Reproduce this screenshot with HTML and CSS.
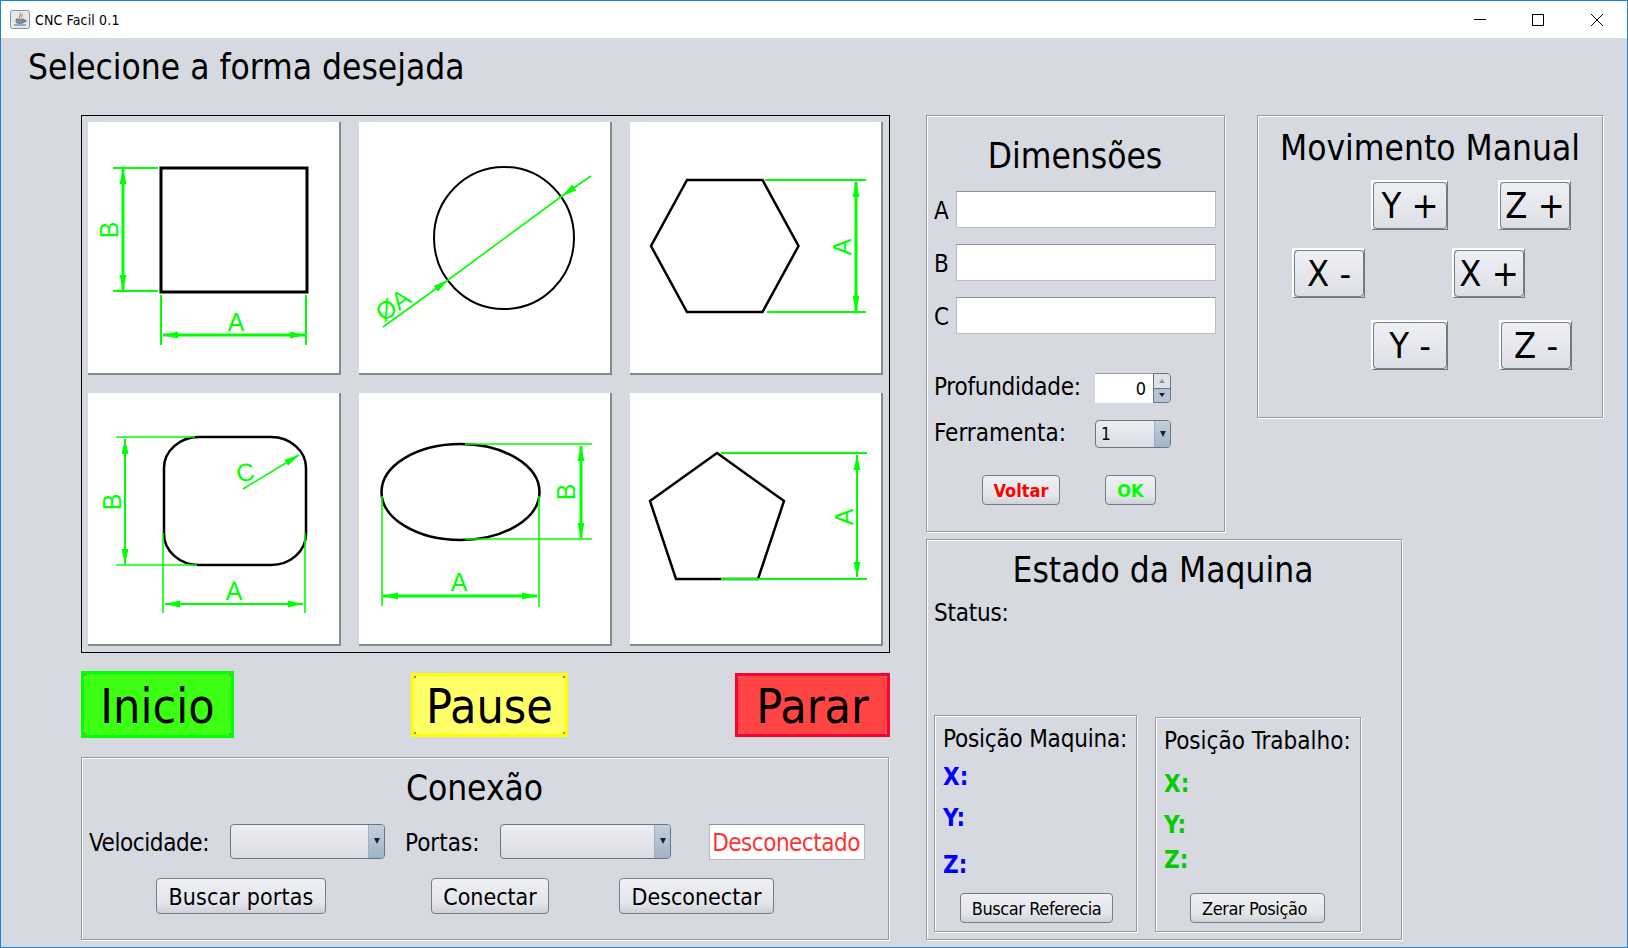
FILE: index.html
```html
<!DOCTYPE html>
<html lang="pt">
<head>
    <meta charset="UTF-8">
    <title>CNC Facil 0.1</title>
    <link rel="stylesheet" href="styles.css">
</head>
<body>
<div class="window">
    <header class="titlebar">
        <svg class="app-icon" width="20" height="19" viewBox="0 0 20 19">
            <rect x="0.5" y="0.5" width="19" height="18" rx="2" fill="#e4e8ee" stroke="#8a929c"/>
            <path d="M10 3c2 2-2 3 0 5M12 4c1 1-1 2 0 3" fill="none" stroke="#e07a20" stroke-width="1.2"/>
            <path d="M6 9h8v3c0 2-8 2-8 0zM14 10h2v2h-2" fill="#7d8fa3" stroke="#5a6a7c" stroke-width="0.6"/>
            <path d="M4 15h12" stroke="#5a6a7c"/>
        </svg>
        <span class="app-title">CNC Facil 0.1</span>
        <div class="win-controls">
            <svg width="58" height="14" viewBox="0 0 58 14"><path d="M23 6.5h12" stroke="#000"/></svg>
            <svg width="58" height="14" viewBox="0 0 58 14"><rect x="23.5" y="1.5" width="11" height="11" fill="none" stroke="#000"/></svg>
            <svg width="58" height="14" viewBox="0 0 58 14"><path d="M24 1l12 12M36 1L24 13" stroke="#000"/></svg>
        </div>
    </header>

    <h1 class="heading">Selecione a forma desejada</h1>

    <div class="main">
        <div class="left-col">
            <div class="shapes">
                <svg class="tile" viewBox="0 0 251 251">
                    <defs>
                        <marker id="arrow" markerUnits="userSpaceOnUse" markerWidth="16" markerHeight="8" refX="15" refY="4" orient="auto-start-reverse">
                            <path d="M0 0.5L15 4L0 7.5z" fill="#00ff00"/>
                        </marker>
                    </defs>
                    <rect class="outline" x="73" y="46" width="146" height="124"/>
                    <path class="dim" d="M25 46h45M25 169h45M73 173v50M218 173v50"/>
                    <line class="dim heavy dim-arrow" x1="35" y1="47" x2="35" y2="168"/>
                    <line class="dim heavy dim-arrow" x1="75" y1="213" x2="217" y2="213"/>
                    <text class="dim-text" x="148" y="209">A</text>
                    <text class="dim-text" transform="translate(30 108) rotate(-90)">B</text>
                </svg>
                <svg class="tile" viewBox="0 0 251 251">
                    <ellipse class="outline circle" cx="145" cy="116" rx="70" ry="71"/>
                    <path class="dim thin-dim" d="M89 158L203 74"/>
                    <line class="dim thin-dim dim-end" x1="24" y1="205" x2="89" y2="158"/>
                    <line class="dim thin-dim dim-end" x1="232" y1="54" x2="203" y2="74"/>
                    <text class="dim-text" transform="translate(39 190) rotate(-36)">ØA</text>
                </svg>
                <svg class="tile" viewBox="0 0 251 251">
                    <polygon class="outline thin" points="57,58 132.5,58 168.5,124 132.5,190 57,190 21,124"/>
                    <path class="dim" d="M135 58h101M137 190h99"/>
                    <line class="dim heavy dim-arrow" x1="226" y1="60" x2="226" y2="189"/>
                    <text class="dim-text" transform="translate(221 125) rotate(-90)">A</text>
                </svg>
                <svg class="tile" viewBox="0 0 251 251">
                    <rect class="outline thin" x="76" y="44" width="142" height="128" rx="35" ry="31"/>
                    <path class="dim thin-dim" d="M28 44h79M28 172h81M75 140v80M217 140v80"/>
                    <line class="dim dim-arrow" x1="37" y1="46" x2="37" y2="171"/>
                    <line class="dim dim-arrow" x1="77" y1="211" x2="215" y2="211"/>
                    <line class="dim thin-dim dim-end" x1="155" y1="96" x2="211" y2="62"/>
                    <text class="dim-text" x="146" y="207">A</text>
                    <text class="dim-text" transform="translate(33 109) rotate(-90)">B</text>
                    <text class="dim-text" transform="translate(159 88) rotate(-10)">C</text>
                </svg>
                <svg class="tile" viewBox="0 0 251 251">
                    <ellipse class="outline thin" cx="101.5" cy="99" rx="79" ry="48"/>
                    <path class="dim thin-dim" d="M106 51h127M106 146h127M23 103v110M180 103v111"/>
                    <line class="dim heavy dim-arrow" x1="222" y1="53" x2="222" y2="145"/>
                    <line class="dim heavy dim-arrow" x1="24" y1="203" x2="178" y2="203"/>
                    <text class="dim-text" x="100" y="198">A</text>
                    <text class="dim-text" transform="translate(216 99) rotate(-90)">B</text>
                </svg>
                <svg class="tile" viewBox="0 0 251 251">
                    <polygon class="outline thin" points="87,60 154,108 128,186 46,186 20,108"/>
                    <path class="dim" d="M91 60h146M91 186h146"/>
                    <line class="dim dim-arrow" x1="227" y1="62" x2="227" y2="184"/>
                    <text class="dim-text" transform="translate(223 124) rotate(-90)">A</text>
                </svg>
            </div>

            <div class="actions">
                <button class="action action-start">Inicio</button>
                <button class="action action-pause">Pause</button>
                <button class="action action-stop">Parar</button>
            </div>

            <section class="panel conexao">
                <h2 class="panel-title conexao-title">Conexão</h2>
                <div class="conexao-row">
                    <label class="label lbl-velocidade">Velocidade:</label>
                    <div class="combo combo-velocidade"><span class="combo-arrow"></span></div>
                    <label class="label lbl-portas">Portas:</label>
                    <div class="combo combo-portas"><span class="combo-arrow"></span></div>
                    <div class="status-field">Desconectado</div>
                </div>
                <div class="conexao-buttons">
                    <button class="btn btn-buscar">Buscar portas</button>
                    <button class="btn btn-conectar">Conectar</button>
                    <button class="btn btn-desconectar">Desconectar</button>
                </div>
            </section>
        </div>

        <div class="right-col">
            <div class="right-top">
                <section class="panel dimensoes">
                    <h2 class="panel-title dimensoes-title">Dimensões</h2>
                    <div class="field"><label class="label field-label">A</label><input class="text-input" type="text"></div>
                    <div class="field"><label class="label field-label">B</label><input class="text-input" type="text"></div>
                    <div class="field"><label class="label field-label">C</label><input class="text-input" type="text"></div>
                    <div class="option option-depth">
                        <label class="label option-label lbl-depth">Profundidade:</label>
                        <div class="spinner">
                            <span class="spinner-value">0</span>
                            <span class="spinner-btns">
                                <span class="spin-btn"><i class="tri tri-up"></i></span>
                                <span class="spin-btn"><i class="tri"></i></span>
                            </span>
                        </div>
                    </div>
                    <div class="option option-tool">
                        <label class="label option-label">Ferramenta:</label>
                        <div class="combo combo-tool"><span class="combo-value">1</span><span class="combo-arrow"></span></div>
                    </div>
                    <div class="dim-buttons">
                        <button class="btn btn-voltar">Voltar</button>
                        <button class="btn btn-ok">OK</button>
                    </div>
                </section>

                <section class="panel movimento">
                    <h2 class="panel-title movimento-title">Movimento Manual</h2>
                    <div class="jog-row jog-row-y">
                        <button class="jog jog-y"><span>Y +</span></button>
                        <button class="jog jog-z"><span>Z +</span></button>
                    </div>
                    <div class="jog-row jog-row-x">
                        <button class="jog"><span>X -</span></button>
                        <button class="jog jog-xp"><span>X +</span></button>
                    </div>
                    <div class="jog-row jog-row-y jog-row-last">
                        <button class="jog jog-y"><span>Y -</span></button>
                        <button class="jog jog-z jog-zm"><span>Z -</span></button>
                    </div>
                </section>
            </div>

            <section class="panel estado">
                <h2 class="panel-title estado-title">Estado da Maquina</h2>
                <div class="label status-label">Status:</div>
                <div class="positions">
                    <div class="panel pos pos-maquina">
                        <div class="label pos-title">Posição Maquina:</div>
                        <div class="axis axis-x">X:</div>
                        <div class="axis axis-y">Y:</div>
                        <div class="axis axis-z">Z:</div>
                        <button class="btn btn-small btn-ref">Buscar Referecia</button>
                    </div>
                    <div class="panel pos pos-trabalho">
                        <div class="label pos-title">Posição Trabalho:</div>
                        <div class="axis axis-x">X:</div>
                        <div class="axis axis-y">Y:</div>
                        <div class="axis axis-z">Z:</div>
                        <button class="btn btn-small btn-zero">Zerar Posição</button>
                    </div>
                </div>
            </section>
        </div>
    </div>
</div>
</body>
</html>
```

FILE: styles.css
```css
*{margin: 0;padding: 0;box-sizing: border-box;}
html,body{width: 1628px;height: 948px;overflow: hidden;}
body{
    font-family: "DejaVu Sans", "Liberation Sans", sans-serif;
    font-stretch: condensed;
    color: #000;
}
button,input{font-family: inherit;font-stretch: inherit;color: inherit;}

.window{
    width: 1628px;
    height: 948px;
    border: 1px solid #1883d7;
    background: #d6d9e0;
}

/* title bar */
.titlebar{
    height: 37px;
    background: #fff;
    display: flex;
    align-items: center;
    padding-left: 9px;
}
.app-title{font-size: 14px;margin-left: 5px;letter-spacing: 0.15px;}
.win-controls{margin-left: auto;margin-right: 2px;display: flex;}
.win-controls svg{display: block;}

.heading{
    font-size: 35px;
    font-weight: normal;
    line-height: 59px;
    height: 77px;
    padding-left: 27px;
}

.main{
    display: flex;
    gap: 36px;
    padding-left: 80px;
}
.left-col{width: 809px;}

/* shape picker */
.shapes{
    height: 538px;
    border: 1px solid #000;
    padding: 6px;
    display: grid;
    grid-template-columns: repeat(3, 253px);
    grid-template-rows: repeat(2, 253px);
    gap: 18px;
}
.tile{
    display: block;
    width: 253px;
    height: 253px;
    background: #fff;
    border-right: 2px solid #8a8a8a;
    border-bottom: 2px solid #8a8a8a;
}
.outline{fill: none;stroke: #000;stroke-width: 3;}
.outline.thin{stroke-width: 2.5;}
.outline.circle{stroke-width: 2;}
.dim{fill: none;stroke: #00ff00;stroke-width: 2;}
.thin-dim{stroke-width: 1.6;}
.heavy{stroke-width: 3;}
.dim-arrow{marker-start: url(#arrow);marker-end: url(#arrow);}
.dim-end{marker-end: url(#arrow);}
.dim-text{
    fill: #00ff00;
    font-family: "Liberation Sans", sans-serif;
    font-size: 25px;
    text-anchor: middle;
    font-stretch: normal;
}

/* start / pause / stop */
.actions{
    display: flex;
    align-items: center;
    height: 67px;
    margin-top: 18px;
}
.action{
    font-size: 48px;
    line-height: 1;
    border-style: solid;
    border-width: 3px;
    height: 64px;
    padding-top: 2px;
    background-size: 2px 2px;
    background-repeat: no-repeat;
    background-image: linear-gradient(#888, #888), linear-gradient(#888, #888), linear-gradient(#888, #888), linear-gradient(#888, #888);
    background-position: 0 0, 100% 0, 0 100%, 100% 100%;
}
.action-start{width: 153px;height: 67px;background-color: #3cff14;border-color: #00ff00;}
.action-pause{width: 157px;margin-left: 177px;background-color: #ffff66;border-color: #ffff00;}
.action-stop{width: 155px;margin-left: auto;background-color: #ff4444;border-color: #ff0033;}

/* etched panels */
.panel{
    border: 1px solid #9a9a9a;
    box-shadow: inset 1px 1px 0 #fff, 1px 1px 0 #fff;
}
.panel-title{font-size: 35px;font-weight: normal;text-align: center;}
.label{font-size: 24px;}

/* generic button */
.btn{
    font-size: 23px;
    height: 36px;
    padding-top: 1px;
    border: 1px solid #777c85;
    border-radius: 4px;
    background: linear-gradient(#eff0f4, #e3e5ea 70%, #ced1d8);
}
.btn-small{font-size: 18px;height: 30px;letter-spacing: -0.4px;}

/* combo box */
.combo{
    height: 35px;
    border: 1px solid #6d7480;
    border-radius: 4px;
    background: linear-gradient(#eeeff3, #d9dce2);
    display: flex;
    overflow: hidden;
}
.combo-arrow{
    margin-left: auto;
    width: 16px;
    background: linear-gradient(#c3d0dd, #9fb3c7);
    border-left: 1px solid #9fb0c2;
    display: flex;
    align-items: center;
    justify-content: center;
}
.combo-arrow::before{
    content: "";
    border-left: 3px solid transparent;
    border-right: 3px solid transparent;
    border-top: 6px solid #222;
}

/* conexao */
.conexao{
    width: 808px;
    height: 183px;
    margin-top: 19px;
    padding-left: 7px;
}
.conexao-title{line-height: 60px;padding-right: 28px;}
.conexao-row{
    display: flex;
    align-items: center;
    height: 36px;
    margin-top: 6px;
}
.conexao-row .label{padding-top: 1px;}
.conexao-row .combo{margin-top: -2px;}
.lbl-velocidade{width: 141px;letter-spacing: -0.4px;}
.combo-velocidade{width: 155px;}
.lbl-portas{width: 95px;margin-left: 20px;}
.combo-portas{width: 171px;}
.status-field{
    width: 156px;
    height: 36px;
    margin-left: 38px;
    padding-right: 2px;
    background: #fff;
    border: 1px solid #b8bac0;
    border-top-color: #8e9096;
    color: #ff3333;
    font-size: 24px;
    letter-spacing: -0.5px;
    line-height: 36px;
    text-align: center;
    white-space: nowrap;
}
.conexao-buttons{
    display: flex;
    margin-top: 18px;
    padding-left: 67px;
}
.btn-buscar{width: 170px;letter-spacing: 0.15px;}
.btn-conectar{width: 118px;margin-left: 105px;}
.btn-desconectar{width: 155px;margin-left: 70px;}

/* right side */
.right-top{display: flex;gap: 32px;}

.dimensoes{
    width: 299px;
    height: 417px;
    padding: 0 8px 0 7px;
}
.dimensoes-title{line-height: 60px;padding-top: 10px;height: 75px;}
.field{
    display: flex;
    align-items: center;
    height: 37px;
    margin-bottom: 16px;
}
.field-label{width: 22px;padding-top: 3px;}
.text-input{
    width: 260px;
    height: 37px;
    background: #fff;
    border: 1px solid #bcbec4;
    border-top-color: #8e9096;
    outline: none;
}
.option{display: flex;align-items: center;}
.option-label{width: 161px;margin-bottom: 2px;}
.lbl-depth{letter-spacing: -0.25px;}
.option-depth{margin-top: 39px;}
.option-tool{margin-top: 16px;}
.spinner{
    width: 76px;
    height: 30px;
    display: flex;
}
.spinner-value{
    width: 58px;
    background: #fff;
    border-top: 1px solid #9a9a9a;
    font-size: 18px;
    line-height: 29px;
    text-align: right;
    padding-right: 7px;
}
.spinner-btns{
    width: 18px;
    border: 1px solid #6d7480;
    border-radius: 0 4px 4px 0;
    overflow: hidden;
    display: flex;
    flex-direction: column;
}
.spin-btn{
    flex: 1;
    display: flex;
    align-items: center;
    justify-content: center;
    background: #dfe3e9;
}
.spin-btn + .spin-btn{background: #b4c5d6;border-top: 1px solid #6d7480;}
.tri{
    border-left: 3px solid transparent;
    border-right: 3px solid transparent;
    border-top: 4px solid #222;
}
.tri-up{
    border-top: 0;
    border-bottom: 4px solid #8a929c;
}
.combo-tool{width: 76px;height: 28px;}
.combo-value{font-size: 17px;line-height: 27px;padding-left: 5px;}
.dim-buttons{
    display: flex;
    margin-top: 26px;
    padding-left: 48px;
}
.btn-voltar,.btn-ok{font-size: 18px;font-weight: bold;height: 30px;}
.btn-voltar{width: 78px;color: #ff0000;}
.btn-ok{width: 51px;margin-left: 45px;color: #00ff00;}

/* manual movement */
.movimento{width: 346px;height: 303px;}
.movimento-title{line-height: 64px;height: 64px;white-space: nowrap;}
.jog-row{display: flex;height: 50px;}
.jog-row-y{padding-left: 113px;}
.jog-row-x{padding-left: 34px;margin-top: 18px;}
.jog-row-last{margin-top: 22px;}
.jog{
    width: 73px;
    border-style: solid;
    border-width: 2px 1px 1px 2px;
    border-color: #fff #777 #777 #fff;
    background: none;
    font-size: 36px;
    line-height: 1;
}
.jog span{
    display: flex;
    align-items: center;
    justify-content: center;
    width: 100%;
    height: 100%;
    border: 1px solid #777c85;
    border-radius: 4px;
    background: linear-gradient(#eff0f4, #dcdfe5);
    white-space: pre;
}
.jog-y{width: 77px;}
.jog-z{margin-left: 50px;}
.jog-zm{margin-left: 51px;}
.jog-xp{margin-left: 87px;}

/* machine state */
.estado{
    width: 476px;
    height: 401px;
    margin-top: 7px;
    padding-left: 7px;
}
.estado-title{line-height: 60px;padding-right: 9px;}
.status-label{line-height: 30px;margin-top: -2px;letter-spacing: -0.2px;}
.positions{
    display: flex;
    margin-top: 87px;
}
.pos{
    height: 217px;
    padding-left: 8px;
    position: relative;
}
.pos-maquina{width: 203px;}
.pos-maquina .pos-title{letter-spacing: -0.2px;}
.pos-trabalho{width: 206px;height: 215px;margin-top: 2px;margin-left: 18px;}
.pos-title{line-height: 30px;white-space: nowrap;margin-top: 8px;}
.axis{
    font-size: 24px;
    font-weight: bold;
    line-height: 30px;
}
.pos-maquina .axis{color: #0000ff;}
.pos-trabalho .axis{color: #00cc00;}
.pos-maquina .axis-x{margin-top: 8px;}
.pos-maquina .axis-y{margin-top: 11px;}
.pos-maquina .axis-z{margin-top: 17px;}
.pos-trabalho .axis-x{margin-top: 13px;}
.pos-trabalho .axis-y{margin-top: 11px;}
.pos-trabalho .axis-z{margin-top: 5px;}
.btn-ref{
    position: absolute;
    left: 25px;
    bottom: 8px;
    width: 153px;
}
.btn-zero{
    position: absolute;
    left: 34px;
    bottom: 8px;
    width: 135px;
    padding-right: 6px;
}
```
